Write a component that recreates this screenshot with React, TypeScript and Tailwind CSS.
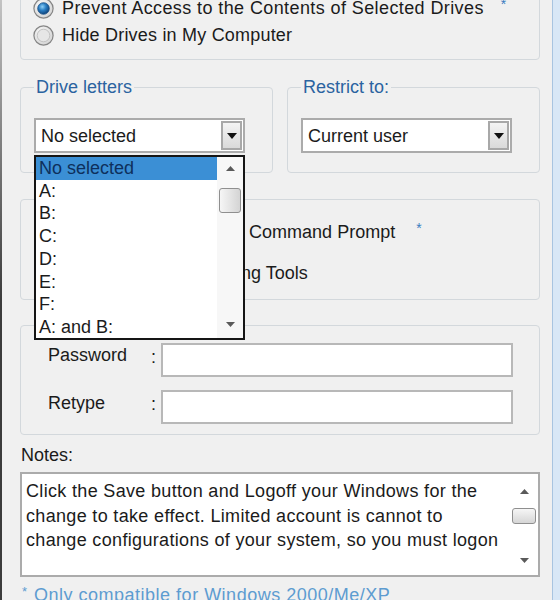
import React from "react";

function Radio({ checked }: { checked?: boolean }) {
  return (
    <svg width="21" height="21" viewBox="0 0 21 21" className="shrink-0">
      <defs>
        <radialGradient id="rbg" cx="40%" cy="35%" r="75%">
          <stop offset="0" stopColor="#fdfdfd" />
          <stop offset="1" stopColor="#cfcfcf" />
        </radialGradient>
        <radialGradient id="rdot" cx="40%" cy="35%" r="70%">
          <stop offset="0" stopColor="#8fd0f7" />
          <stop offset="0.45" stopColor="#2a7fc4" />
          <stop offset="1" stopColor="#0b3c74" />
        </radialGradient>
      </defs>
      <circle cx="10.5" cy="10.5" r="9.6" fill="url(#rbg)" stroke="#858585" strokeWidth="1.2" />
      {checked ? (
        <circle cx="10.5" cy="10.5" r="5.8" fill="url(#rdot)" stroke="#174f86" strokeWidth="0.8" />
      ) : (
        <circle cx="10.5" cy="10.5" r="6.3" fill="#e6e6e6" stroke="#c2c2c2" strokeWidth="1" />
      )}
    </svg>
  );
}

function Check() {
  return <div className="w-[19px] h-[19px] shrink-0 border border-[#8a8a8a] bg-gradient-to-br from-[#e0e0e0] to-[#fafafa]" />;
}

function DownTri({ color = "#111", w = 10, h = 6 }: { color?: string; w?: number; h?: number }) {
  return (
    <svg width={w} height={h} viewBox={`0 0 ${w} ${h}`}>
      <path d={`M0 0H${w}L${w / 2} ${h}Z`} fill={color} />
    </svg>
  );
}

function UpTri({ color = "#5a5a5a", w = 9, h = 5 }: { color?: string; w?: number; h?: number }) {
  return (
    <svg width={w} height={h} viewBox={`0 0 ${w} ${h}`}>
      <path d={`M0 ${h}H${w}L${w / 2} 0Z`} fill={color} />
    </svg>
  );
}

function Combo({ value, children }: { value: string; children?: React.ReactNode }) {
  return (
    <div className="relative w-[211px] h-[35px] border-2 border-[#ababab] bg-white flex items-center pl-[5px]">
      <span className="leading-[20px]">{value}</span>
      <div className="ml-auto mr-[1px] w-[21px] h-[29px] border-2 border-[#a8a8a8] bg-gradient-to-b from-[#f4f4f4] to-[#dadada] flex items-center justify-center">
        <DownTri />
      </div>
      {children}
    </div>
  );
}

const drives = ["No selected", "A:", "B:", "C:", "D:", "E:", "F:", "A: and B:"];

function DropList() {
  return (
    <div className="absolute left-[-2px] top-[35px] w-[211px] h-[185px] border-2 border-[#151515] bg-white flex z-10">
      <div className="flex-1 flex flex-col">
        {drives.map((d, i) => (
          <div
            key={d}
            className={
              i === 0
                ? "h-[22.75px] shrink-0 flex items-center px-[3px] bg-[#3b8fd5] text-[#0e2f5c]"
                : "h-[22.75px] shrink-0 flex items-center px-[3px]"
            }
          >
            {d}
          </div>
        ))}
      </div>
      <div className="w-[26px] bg-[#f7f7f7] flex flex-col items-center">
        <div className="h-[22px] w-full flex items-center justify-center">
          <UpTri />
        </div>
        <div className="mt-[9px] w-[22px] h-[25px] rounded-[3px] border border-[#8f8f8f] bg-gradient-to-r from-[#f6f6f6] to-[#d4d4d4]" />
        <div className="flex-1" />
        <div className="h-[28px] w-full flex items-center justify-center">
          <DownTri color="#5a5a5a" w={9} h={5} />
        </div>
      </div>
    </div>
  );
}

export default function App() {
  return (
    <div className="w-[560px] h-[600px] overflow-hidden flex bg-[#f0f0f0] text-[18px] text-[#1b1b1b] font-['Liberation_Sans',Arial,sans-serif]">
      <div className="w-[2px] shrink-0 bg-gradient-to-b from-[#c4c4c4] via-[#3c3c3c] to-[#3c3c3c]" />
      <div className="flex-1 min-w-0 pl-[18px] pr-[12px] flex flex-col">
        {/* Top group */}
        <div className="-mt-[20px] h-[80px] shrink-0 border border-[#d3d8dc] rounded-[4px] pt-[14px] pl-[12px] flex flex-col gap-[1px]">
          <div className="h-[26px] flex items-center gap-[8px]">
            <Radio checked />
            <span className="leading-[20px] tracking-[0.4px]">Prevent Access to the Contents of Selected Drives</span>
            <span className="self-start ml-[9px] mt-[2px] text-[14px] leading-[14px] text-[#3a7cc0]">*</span>
          </div>
          <div className="h-[26px] flex items-center gap-[8px]">
            <Radio />
            <span className="leading-[20px] tracking-[0.2px]">Hide Drives in My Computer</span>
          </div>
        </div>

        {/* Drive letters / Restrict to */}
        <div className="mt-[17px] grid grid-cols-2 gap-x-[14px] shrink-0">
          <fieldset className="min-w-0 border border-[#d3d8dc] rounded-[4px] px-[13px] pt-[21px] pb-[19px]">
            <legend className="px-[2px] leading-[20px] text-[#2b63a0]">Drive letters</legend>
            <Combo value="No selected">
              <DropList />
            </Combo>
          </fieldset>
          <fieldset className="min-w-0 border border-[#d3d8dc] rounded-[4px] px-[13px] pt-[21px] pb-[19px]">
            <legend className="px-[2px] leading-[20px] text-[#2b63a0]">Restrict to:</legend>
            <Combo value="Current user" />
          </fieldset>
        </div>

        {/* Options group */}
        <div className="mt-[26px] shrink-0 border border-[#d3d8dc] rounded-[4px] pt-[19px] pb-[13px] pl-[14px] flex flex-col gap-[15px]">
          <div className="h-[26px] flex items-center">
            <Check />
            <span className="ml-[16px] leading-[20px] whitespace-nowrap">Prevent Access to the Command Prompt</span>
            <span className="self-start ml-[21px] mt-[2px] text-[14px] leading-[14px] text-[#3a7cc0]">*</span>
          </div>
          <div className="h-[26px] flex items-center">
            <Check />
            <span className="ml-[16px] leading-[20px] whitespace-nowrap">Disable Registry Editing Tools</span>
          </div>
        </div>

        {/* Password group */}
        <div className="mt-[25px] shrink-0 border border-[#d3d8dc] rounded-[4px] pt-[17px] pb-[10px] pl-[27px] flex flex-col gap-[13px]">
          <div className="h-[34px] flex items-center">
            <span className="w-[103px] mb-[10px] leading-[20px]">Password</span>
            <span className="w-[10px] mb-[6px] leading-[20px]">:</span>
            <div className="w-[352px] h-[34px] border-2 border-[#b8b8b8] bg-white" />
          </div>
          <div className="h-[34px] flex items-center">
            <span className="w-[103px] mb-[8px] leading-[20px]">Retype</span>
            <span className="w-[10px] mb-[6px] leading-[20px]">:</span>
            <div className="w-[352px] h-[34px] border-2 border-[#b8b8b8] bg-white" />
          </div>
        </div>

        {/* Notes */}
        <div className="mt-[10px] ml-[1px] leading-[20px] shrink-0">Notes:</div>
        <div className="mt-[7px] h-[105px] shrink-0 border-2 border-[#ababab] bg-white flex">
          <div className="flex-1 pt-[5px] pl-[4px] leading-[24.5px] tracking-[0.33px] whitespace-nowrap overflow-hidden">
            <div>Click the Save button and Logoff your Windows for the</div>
            <div>change to take effect. Limited account is cannot to</div>
            <div>change configurations of your system, so you must logon</div>
          </div>
          <div className="w-[28px] flex flex-col items-center">
            <div className="h-[34px] w-full flex items-center justify-center">
              <UpTri />
            </div>
            <div className="w-[24px] h-[16px] rounded-[3px] border border-[#8f8f8f] bg-gradient-to-b from-[#f6f6f6] to-[#d6d6d6]" />
            <div className="flex-1" />
            <div className="h-[30px] w-full flex items-center justify-center">
              <DownTri color="#5a5a5a" w={9} h={5} />
            </div>
          </div>
        </div>
        <div className="mt-[8px] leading-[20px] text-[#5d9cd0] whitespace-nowrap shrink-0 flex items-start">
          <span className="text-[13px] leading-[14px] ml-[2px]">*</span>
          <span className="ml-[7px] tracking-[0.5px]">Only compatible for Windows 2000/Me/XP</span>
        </div>
      </div>
      <div className="w-[8px] shrink-0 border-l border-[#a8c4e0] bg-[#d8e7f6]" />
    </div>
  );
}
